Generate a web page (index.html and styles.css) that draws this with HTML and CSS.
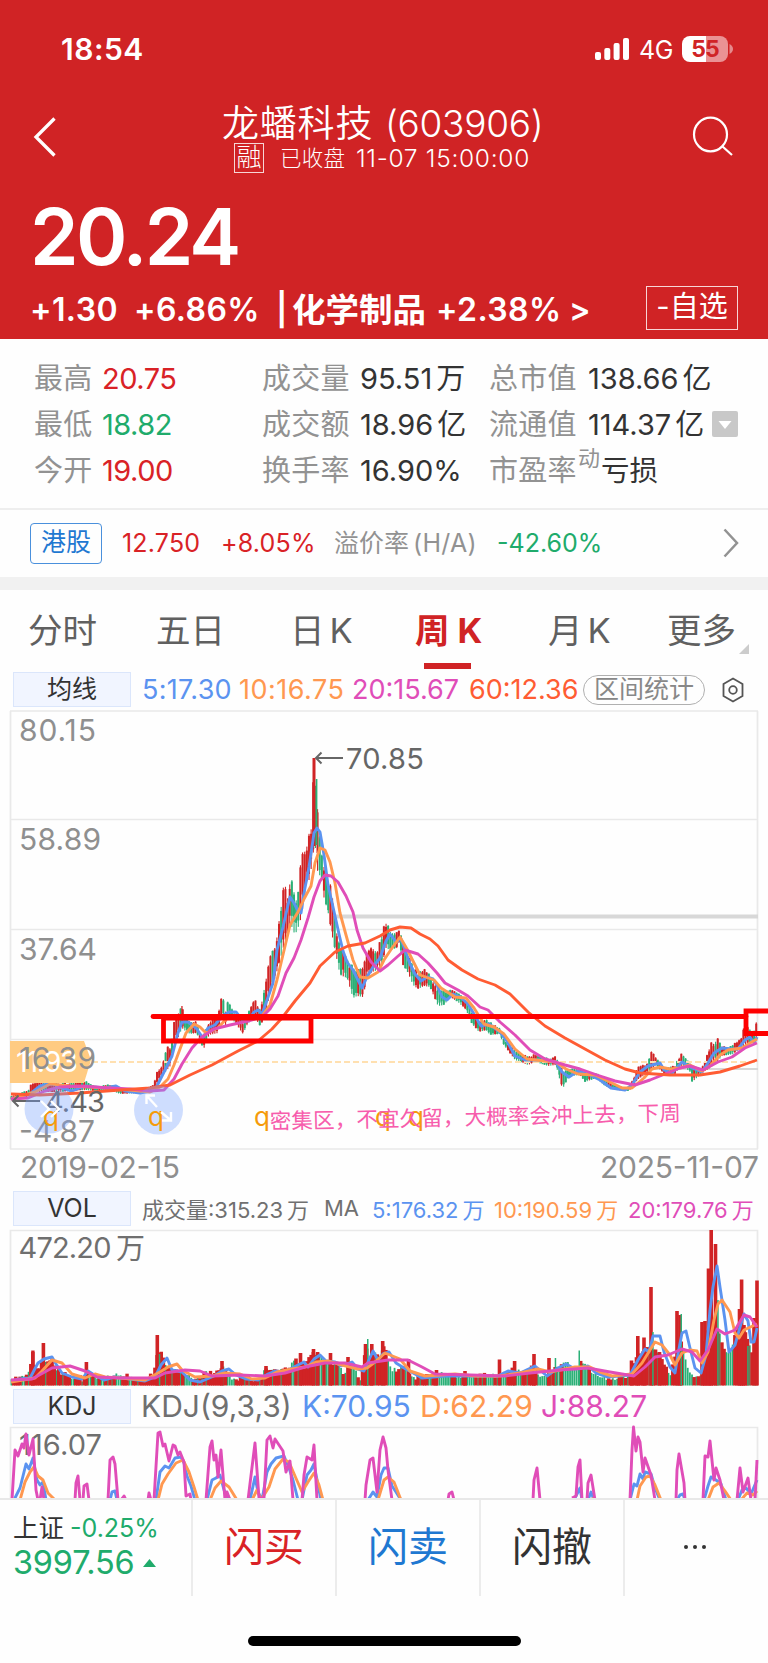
FILE: index.html
```
<!DOCTYPE html>
<html lang="zh-CN">
<head>
<meta charset="utf-8">
<title>龙蟠科技 (603906)</title>
<link rel="stylesheet" href="styles.css">
</head>
<body>
<header class="hero">
  <div class="status">
    <span class="clock">18:54</span>
    <svg class="signal" viewBox="0 0 36 24"><rect x="0" y="15" width="6" height="8" rx="2"/><rect x="9.3" y="11" width="6" height="12" rx="2"/><rect x="18.6" y="6" width="6" height="17" rx="2"/><rect x="28" y="1" width="6" height="22" rx="2"/></svg>
    <span class="net">4G</span>
    <span class="battery">55</span>
    <svg class="nub" viewBox="0 0 4 10"><path d="M0.5 0Q4 2 4 5T0.5 10Z"/></svg>
  </div>
  <nav class="nav">
    <svg class="back" viewBox="0 0 24 42"><path d="M21.500 2.500L3 21L21.500 39.500"/></svg>
    <div class="heading">
      <div class="title"><span class="t-name">龙蟠科技</span><span class="t-code">(603906)</span></div>
      <div class="subtitle"><span class="margin-tag">融</span><span class="closed">已收盘</span><span class="stamp">11-07 15:00:00</span></div>
    </div>
    <svg class="search" viewBox="0 0 42 42"><ellipse cx="18.500" cy="18.500" rx="16.500" ry="16.800"/><path d="M30.500 30.500L40 39"/></svg>
  </nav>
  <div class="price">20.24</div>
  <div class="change">
    <span class="delta">+1.30</span><span class="delta">+6.86%</span><span>|</span><span class="sector">化学制品</span><span class="delta">+2.38%</span><span class="gt">&gt;</span>
    <span class="watch">-自选</span>
  </div>
</header>

<section class="stats">
  <span class="k">最高</span><span class="v up">20.75</span><span class="k">成交量</span><span class="v">95.51<i>万</i></span><span class="k">总市值</span><span class="v">138.66<i>亿</i></span>
  <span class="k">最低</span><span class="v down">18.82</span><span class="k">成交额</span><span class="v">18.96<i>亿</i></span><span class="k">流通值</span><span class="v">114.37<i>亿</i><svg class="expand" viewBox="0 0 26 26"><rect width="26" height="26" rx="2"/><path d="M6.500 10H19.500L13 18Z"/></svg></span>
  <span class="k">今开</span><span class="v up">19.00</span><span class="k">换手率</span><span class="v">16.90%</span><span class="k">市盈率<sup>动</sup></span><span class="v loss">亏损</span>
</section>

<section class="hk">
  <span class="hk-tag">港股</span><span class="up">12.750</span><span class="up">+8.05%</span><span class="muted">溢价率<i>(H/A)</i></span><span class="down">-42.60%</span>
  <svg class="more" viewBox="0 0 16 30"><path d="M1.500 1.500L14 15L1.500 28.500"/></svg>
</section>

<nav class="tabs">
  <span>分时</span><span>五日</span><span>日<i>K</i></span><span class="on">周<i>K</i></span><span>月<i>K</i></span><span class="last">更多</span>
</nav>

<div class="legend ma">
  <span class="chip">均线</span><span class="blue">5:17.30</span><span class="orange ma10">10:16.75</span><span class="pink">20:15.67</span><span class="coral">60:12.36</span><span class="pill">区间统计</span>
  <svg class="gear" viewBox="0 0 24 26"><path d="M12 1.500L21.500 7V19L12 24.500L2.500 19V7Z"/><circle cx="12" cy="13" r="3.800"/></svg>
</div>
<svg class="kline" id="kline" viewBox="0 710 768 476">
  <g class="grid"><path d="M10.500 711V1149M757.500 711V1149M10 711H758M10 819.500H758M10 929.500H758M10 1039.500H758M10 1149H758"/></g>
  <path class="level" d="M335 916.500H758"/>
  <path class="level thin" d="M640 1069H758"/>
  <g id="candles"></g>
  <path class="dash" d="M92 1062H758"/>
  <g id="lines"></g>
  <path class="tag" d="M10 1041H84L91 1060L84 1083H10Z"/>
  <text class="tagtext" x="16" y="1072" textLength="62">11.93</text>
  <g class="axis">
    <text x="19" y="741" textLength="77">80.15</text>
    <text x="19" y="850" textLength="82">58.89</text>
    <text x="19" y="960" textLength="78">37.64</text>
    <text x="19" y="1069" textLength="77">16.39</text>
    <text x="19" y="1142" textLength="76">-4.87</text>
    <text x="20" y="1178" textLength="160">2019-02-15</text>
    <text x="600" y="1178" textLength="159">2025-11-07</text>
  </g>
  <g class="note">
    <text x="346" y="769" textLength="78">70.85</text><path d="M343 758H317M321.500 752.500L316 758L321.500 763.500"/>
    <text x="45" y="1112" textLength="60">4.43</text><path d="M40 1101H13M18.500 1095.500L13 1101L18.500 1106.500"/>
  </g>
  <g class="round"><circle cx="49" cy="1109" r="24.500"/><circle cx="158.500" cy="1110" r="24.500"/></g>
  <g class="q"><text x="43" y="1126">q</text><text x="148" y="1126">q</text><text x="254" y="1126">q</text><text x="375" y="1126">q</text><text x="408" y="1126">q</text></g>
  <path class="arrows" d="M41 1101L49 1109L41 1117M51 1101L59 1109L51 1117M157 1107L146.500 1095.500M146.500 1104V1095.500H155M161 1112L171 1120.500M171 1112V1120.500H162"/>
  <text class="memo" x="270" y="1129" textLength="411" transform="rotate(-1.150 270 1129)">密集区，不宜久留，大概率会冲上去，下周</text>
  <path class="mark round-cap" d="M153 1016.500H746"/>
  <path class="mark" d="M163.500 1018H311V1041H163.500ZM768 1011H746V1033.500H768"/>
</svg>

<div class="legend vol-legend">
  <span class="chip">VOL</span><span class="muted-dark">成交量:315.23<i>万</i></span><span class="muted-dark">MA</span><span class="blue">5:176.32<i>万</i></span><span class="orange">10:190.59<i>万</i></span><span class="pink">20:179.76<i>万</i></span>
</div>
<svg class="volume" id="volume" viewBox="0 1228 768 158">
  <path class="frame" d="M10.500 1385V1230.500H757.500V1385"/>
  <g id="bars"></g><g id="vlines"></g>
  <text class="label" x="18.500" y="1258" textLength="93">472.20</text><text class="label" x="116" y="1259">万</text>
</svg>

<div class="legend kdj-legend">
  <span class="chip">KDJ</span><span class="muted-dark">KDJ(9,3,3)</span><span class="blue">K:70.95</span><span class="orange">D:62.29</span><span class="pink">J:88.27</span>
</div>
<svg class="kdj" viewBox="0 1425 768 73">
  <path class="frame" d="M10.500 1500V1427.500H757.500V1500"/>
  <text class="label" x="19" y="1455" textLength="83">116.07</text>
  <g id="klines"></g>
</svg>

<footer class="dock">
  <div class="index"><div><span class="idx-name">上证</span><span class="idx-pct">-0.25%</span></div><div class="idx-val"><span>3997.56</span><svg viewBox="0 0 13 8"><path d="M0 8L6.500 0L13 8Z"/></svg></div></div>
  <div class="act up">闪买</div><div class="act sell">闪卖</div><div class="act">闪撤</div>
  <div class="act dots"><i></i><i></i><i></i></div>
</footer>
<div class="home"></div>
<script src="chart.js"></script>
</body>
</html>
```
FILE: styles.css
```
* { box-sizing: border-box; }
body { margin: 0; width: 768px; height: 1663px; overflow: hidden; background: #fefefe; font-family: "Inter", "Noto Sans CJK SC", sans-serif; color: #333; }
i { font-style: normal; }
svg { display: block; }
span { white-space: nowrap; }
.up { color: #d92226; }
.down { color: #20ab6b; }
.blue { color: #5b93f0; }
.orange { color: #ff9850; }
.pink { color: #e04db8; }
.coral { color: #ff5c33; }
.muted { color: #929292; }
.muted-dark { color: #707070; }

.hero { height: 339px; background: #d02325; color: #fff; }
.status { height: 98px; display: flex; align-items: center; padding-left: 61px; }
.clock { width: 534px; font-size: 30px; font-weight: 600; letter-spacing: .5px; }
.signal { width: 36px; height: 24px; fill: #fff; margin-right: 8px; }
.net { width: 43px; font-size: 25px; font-weight: 400; letter-spacing: -.5px; padding-top: 1px; }
.battery { width: 46px; height: 26px; border-radius: 8px; background: linear-gradient(90deg, #fff 53%, #ea9294 53%); color: #d02325; font-size: 23px; font-weight: 700; line-height: 26px; text-align: center; letter-spacing: -1px; }
.nub { width: 4px; height: 10px; margin-left: 1px; fill: #e58a8c; }
.nav { height: 86px; display: flex; padding-left: 33px; }
.back, .search { fill: none; stroke: #fff; }
.back { width: 24px; height: 42px; margin-top: 18px; stroke-width: 3.300; }
.heading { width: 635px; padding-top: 6px; }
.title { height: 39px; line-height: 39px; font-size: 37px; padding-left: 165px; display: flex; font-weight: 350; }
.t-name { width: 163px; letter-spacing: .8px; }
.t-code { letter-spacing: -.3px; }
.subtitle { display: flex; height: 30px; line-height: 31px; padding-left: 177px; }
.margin-tag { width: 30px; height: 30px; border: 1px solid #ffffffd0; font-size: 25px; line-height: 26px; text-align: center; margin-right: 16px; font-weight: 300; }
.closed { width: 76px; font-size: 21.500px; font-weight: 300; letter-spacing: .3px; }
.stamp { font-size: 24.500px; font-weight: 350; letter-spacing: .7px; }
.search { width: 42px; height: 42px; margin-top: 18px; stroke-width: 2.200; }
.price { height: 104px; line-height: 106px; padding-left: 30px; font-size: 78px; font-weight: 600; letter-spacing: -2.700px; }
.change { display: grid; grid-template-columns: 104px 142px 16px 144px 133px 77px 92px; padding-left: 30px; line-height: 44px; font-size: 32px; font-weight: 600; }
.change .delta { letter-spacing: .4px; }
.change .sector { font-size: 33.500px; }
.watch { height: 44px; margin-top: -2px; border: 1.500px solid #ffffffd0; font-size: 29px; font-weight: 400; line-height: 40px; text-align: center; }

.stats { height: 169px; padding: 17px 0 0 34px; display: grid; grid-template-columns: 68px 160px 98px 129px 99px 1fr; grid-auto-rows: 46px; align-content: start; line-height: 46px; font-size: 29px; }
.stats .k { color: #929292; letter-spacing: .3px; }
.stats .v:nth-child(6n+2) { letter-spacing: -.500px; }
.stats .v i { margin-left: 4px; }
.stats .loss { padding-left: 13px; font-size: 28.500px; }
.stats sup { font-size: 22px; line-height: 0; vertical-align: 15px; margin-left: 1px; }
.expand { display: inline-block; width: 26px; height: 26px; margin-left: 8px; vertical-align: -2px; fill: #c8c8c8; }
.expand path { fill: #fff; }

.hk { height: 69px; border-top: 2px solid #eee; display: grid; grid-template-columns: 92px 99px 113px 163px 226px 16px; padding: 13px 0 0 30px; line-height: 41px; font-size: 25px; }
.hk-tag { width: 72px; height: 41px; border: 1.500px solid #4a90dc; border-radius: 4px; color: #1f78d1; text-align: center; line-height: 37px; font-size: 25px; }
.hk .up { letter-spacing: .2px; }
.hk .muted i { margin-left: 4px; letter-spacing: .3px; }
.more { width: 16px; height: 30px; margin-top: 5px; fill: none; stroke: #929292; stroke-width: 2.500; }

.tabs { border-top: 13px solid #f1f1f1; height: 95px; padding: 19px 0 0 28px; display: grid; grid-template-columns: 128px 134px 125px 133px 119px 87px; line-height: 44px; font-size: 34.500px; color: #606060; }
.tabs i { margin-left: 5px; }
.tabs .on { color: #d02325; font-weight: 700; position: relative; }
.tabs .on i { margin-left: 8px; }
.tabs .on::after { content: ""; position: absolute; left: 9px; top: 54px; width: 47px; height: 6px; background: #d02325; }
.tabs .last { position: relative; }
.tabs .last::after { content: ""; position: absolute; right: 5px; top: 35px; border: solid transparent; border-width: 0 0 10px 10px; border-bottom-color: #ccc; }

.legend { display: flex; align-items: center; padding-left: 13px; height: 35px; font-size: 27px; }
.chip { width: 118px; height: 35px; background: #f1f5ff; border: 1.500px solid #dbe6fb; text-align: center; line-height: 33px; font-size: 25px; color: #333; margin-right: 11px; }
.ma { height: 35px; margin-bottom: 3px; display: grid; grid-template-columns: 129px 97px 113px 117px 114px 138px 24px; }
.ma > .blue { letter-spacing: .3px; }
.ma10 { letter-spacing: .5px; }
.pill { width: 122px; height: 30px; border: 1.500px solid #b0b0b0; border-radius: 15px; font-size: 25px; line-height: 26px; text-align: center; color: #888; }
.gear { width: 24px; height: 26px; fill: none; stroke: #555; stroke-width: 1.800; }
.kline { width: 768px; height: 476px; }
.kline path, .volume path, .kdj path { fill: none; }
.grid path, path.frame { stroke: #e9e9e9; stroke-width: 1.700; }
.level { stroke: #d8d8d8; stroke-width: 4; }
.level.thin { stroke-width: 2; }
.dash { stroke: #ffe0b0; stroke-width: 1.800; stroke-dasharray: 6 3; }
.kline .tag { fill: #ffcb82; }
.tagtext { fill: #fff; font-size: 29px; }
.axis text { fill: #8f8f8f; font-size: 30px; }
.note text { fill: #666; font-size: 29px; }
.note path { stroke: #666; stroke-width: 2; }
.round circle { fill: #75a0ff; opacity: .35; }
.arrows { stroke: #fff; stroke-width: 2.400; }
.q text { fill: #f59b0b; font-size: 26px; }
.memo { fill: #f75cac; font-size: 21.500px; font-family: "Noto Sans CJK SC", sans-serif; }
.mark { stroke: #fe0000; stroke-width: 4.800; }
.round-cap { stroke-linecap: round; }
.ln { stroke-width: 2.900; stroke-linejoin: round; }
.label { fill: #6f6f6f; font-size: 29px; }

.vol-legend { margin-top: 5px; font-size: 22px; display: grid; grid-template-columns: 129px 182px 48px 122px 134px 1fr; }
.vol-legend span:not(.chip) { padding-bottom: 1px; }
.vol-legend i { margin-left: 4px; }
.volume { width: 768px; height: 158px; margin-top: 2px; }
.kdj-legend { margin-top: 2px; display: grid; grid-template-columns: 128px 161px 118px 121px 1fr; font-size: 30px; }
.kdj { width: 768px; height: 73px; margin-top: 2px; }

.dock { height: 98px; border-top: 2px solid #e8e8e8; display: grid; grid-template-columns: 193px 144px 144px 144px 1fr; }
.index { border-right: 2px solid #ececec; padding: 11px 0 0 13px; }
.index > div { display: flex; line-height: 34px; }
.idx-name { width: 57px; font-size: 25.500px; }
.idx-pct { font-size: 25px; color: #20ab6b; }
.index > .idx-val { font-size: 32.500px; color: #20ab6b; letter-spacing: -.2px; align-items: center; gap: 8px; line-height: 35px; }
.idx-val svg { width: 13px; height: 8px; fill: #20ab6b; }
.act { border-right: 2px solid #ececec; text-align: center; line-height: 94px; font-size: 40px; }
.sell { color: #1f78d1; }
.dots { border: 0; display: flex; justify-content: center; align-items: center; gap: 5px; padding: 0 3px 3px 0; }
.dots i { width: 4px; height: 4px; border-radius: 50%; background: #333; }
.home { width: 273px; height: 10px; border-radius: 5px; background: #000; margin: 40px 0 0 248px; }
```
FILE: chart.js
```
const NS = 'http://www.w3.org/2000/svg';
const parse = s => s.trim().split(/\s+/).map(p => p.split(',').map(Number));
const RED = '#d02325', GREEN = '#2bb077';

function line(host, color, data) {
  data.split('|').forEach(part => {
    const p = document.createElementNS(NS, 'polyline');
    p.setAttribute('points', part.trim());
    p.setAttribute('fill', 'none');
    p.setAttribute('stroke', color);
    p.setAttribute('class', 'ln');
    document.getElementById(host).appendChild(p);
  });
}
function rect(host, x, y, w, h, color) {
  const r = document.createElementNS(NS, 'rect');
  r.setAttribute('x', x); r.setAttribute('y', y);
  r.setAttribute('width', w); r.setAttribute('height', Math.max(h, 1));
  r.setAttribute('fill', color);
  document.getElementById(host).appendChild(r);
}
function at(keys, x) {
  let i = 1;
  while (i < keys.length - 1 && keys[i][0] < x) i++;
  const a = keys[i - 1], b = keys[i], t = Math.min(1, Math.max(0, (x - a[0]) / (b[0] - a[0])));
  return a.slice(1).map((v, k) => v + (b[k + 1] - v) * t);
}
const noise = n => { const s = Math.sin(n * 127.1 + 3.7) * 43758.5453; return s - Math.floor(s); };

// x, high, low
const range = parse(`11,1096,1100 28,1090,1097 32,1082,1093 40,1080,1092 60,1083,1092 86,1081,1090 95,1086,1091 112,1084,1091 120,1088,1094 140,1089,1093 153,1085,1091
158,1068,1083 162,1064,1076 167,1046,1070 171,1046,1065 174,1022,1040 178,1010,1038 182,1007,1028 184,1013,1030 190,1022,1034 197,1020,1033 200,1033,1044 204,1035,1048
209,1020,1035 218,1013,1033 221,998,1020 223,995,1015 226,1012,1028 228,998,1012 233,1010,1020 243,1022,1034 247,1014,1025 254,998,1016 260,1008,1026 265,980,1018
270,955,992 275,945,978 280,910,960 284,878,945 288,893,935 290,875,922 293,880,930 295,898,935 299,890,925 301,850,918 304,850,900 307,840,880 310,826,880
312,820,860 314,759,848 316,780,848 318,812,878 321,850,873 324,862,898 328,878,912 332,885,935 335,920,950 340,945,975 347,958,978 353,965,998 357,970,996
363,965,997 367,950,978 372,945,972 378,950,970 382,930,965 386,919,948 390,929,950 397,932,948 399,930,942 403,938,965 408,952,973 413,965,985 418,972,989
424,968,986 430,975,987 438,988,1006 444,990,1005 450,989,997 458,992,1002 466,1000,1010 472,1012,1024 479,1020,1032 486,1018,1030 490,1022,1035 500,1027,1034
503,1038,1044 515,1050,1060 528,1056,1065 535,1054,1062 548,1058,1066 556,1056,1065 561,1066,1085 563,1072,1088 569,1068,1076 580,1069,1075 585,1073,1082
596,1072,1078 605,1078,1086 615,1085,1090 628,1088,1091 633,1078,1088 637,1068,1080 640,1065,1078 648,1062,1073 651,1050,1070 656,1056,1065 664,1067,1074
675,1065,1074 679,1056,1068 682,1053,1065 690,1062,1072 692,1066,1082 700,1070,1075 706,1058,1070 710,1043,1068 714,1040,1064 717,1036,1062 722,1045,1056
728,1048,1055 734,1043,1054 742,1036,1046 744,1022,1046 750,1028,1042 754,1030,1042 757,1017,1038`);
// x, top of bar
const vol = parse(`11,1379 27,1377 31,1362 33,1352 36,1370 44,1362 52,1358 56,1370 70,1377 80,1376 83,1382 88,1368 98,1380 112,1376 125,1375 140,1381 154,1374 158,1350 163,1356 166,1364
170,1368 180,1372 190,1376 194,1382 204,1372 216,1374 222,1366 228,1375 236,1380 246,1377 256,1380 262,1374 268,1368 276,1372 286,1369 296,1361 304,1366 312,1352 318,1353
324,1363 330,1366 338,1362 344,1375 348,1362 354,1368 360,1380 366,1345 370,1365 374,1352 380,1358 384,1345 392,1371 404,1368 412,1378 430,1376 445,1374 460,1377 480,1375
498,1375 505,1374 515,1368 522,1374 532,1366 540,1376 550,1374 556,1366 568,1364 575,1369 582,1360 588,1368 596,1375 608,1378 628,1378 636,1358 641,1352 650,1345 656,1350
662,1360 670,1376 676,1350 682,1340 686,1362 692,1375 700,1378 706,1330 712,1320 719,1330 724,1350 730,1352 738,1325 746,1335 752,1350 757,1320`);
const spikes = parse(`32.8,1352 43.4,1343 86.4,1362 157.3,1335 159.6,1354 222,1361 266,1366 296,1358.500 300.500,1353 313.500,1349 317.600,1352 330.500,1353 348,1357 365.500,1344 367.800,1339 371.800,1344
382.700,1341 408.500,1359 436.500,1370 465,1371 499.500,1359.500 514.600,1361 534,1354 549,1358 555.500,1358 579.300,1350.500 631.500,1360.500 637.800,1336 644,1337.500 651,1287
653,1332 659.500,1352 677,1311 680,1315 681.300,1314 702,1322 705,1321 708.500,1268.500 711.200,1230 715.500,1244 718,1300 739.500,1309 741.600,1279.500 744,1325 748,1346 754,1318 757,1280.500`);

// green is more likely while the range is falling
const STEP = 2.14;
const bars = [];
for (let i = 0, x = 11.5; x < 757; i++, x += STEP) {
  const [hi, lo] = at(range, x), [prev] = at(range, x - 5), span = lo - hi;
  const falling = hi > prev + 1, rising = hi < prev - 1;
  const odds = falling ? 0.6 : rising ? 0.2 : 0.45;
  const color = noise(i) < odds ? GREEN : RED;
  const n1 = noise(i + 900) * span * 0.28, n2 = noise(i + 1900) * span * 0.28;
  rect('candles', x - 0.5, hi + n1 * 0.6, 1.1, span - n1 * 0.6, color);
  rect('candles', x - 1, hi + n1, 2, span - n1 - n2, color);
  const y = Math.min(1382, at(vol, x)[0] + (noise(i + 77) - 0.5) * 5);
  bars.push([x, y, color]);
}
bars.filter(b => b[2] === GREEN).forEach(([x, y]) => rect('bars', x - 0.9, y, 1.8, 1385.5 - y, GREEN));
bars.filter(b => b[2] === RED).forEach(([x, y]) => rect('bars', x - 1.7, y, 3.4, 1385.5 - y, RED));
rect('candles', 312.5, 758, 3, 88, RED);
rect('candles', 315.8, 779, 1.6, 66, GREEN);
rect('candles', 181.3, 1006, 1.3, 20, RED);
const greens = [159.6, 367.8, 555.5, 579.3, 653, 681.3, 718, 748];
spikes.forEach(([x, y]) => {
  const g = greens.includes(x);
  rect('bars', x - (g ? 0.8 : 1.8), y, g ? 1.5 : 3.6, 1385.5 - y, g ? GREEN : RED);
});

line('lines', '#5b93f0', `11,1099 30,1094 40,1086 52,1083 62,1088 72,1091 85,1086 105,1088 116,1086 125,1091 140,1093 155,1090 160,1080 166,1068 172,1056 178,1033 182,1022 188,1022 196,1028 203,1038 208,1028 215,1025 222,1016 229,1012 236,1012 243,1021 248,1021 254,1012 258,1010 262,1014 266,1003 273,983 277,950 283,927 288,905 290,897 294,903 298,911 301,913 304,893 309,867 314,833 317,828 320,832 324,855 328,885 333,907 339,934 343,951 347,962 353,970 358,980 362,988 367,977 373,967 380,958 386,941 390,934 396,942 401,939 405,950 410,964 415,974 421,981 427,977 433,979 437,985 442,997 447,1000 453,994 460,997 468,1004 474,1014 481,1026 489,1024 500,1032 507,1041 515,1056 525,1060 540,1060 556,1062 562,1072 569,1077 578,1071 590,1075 600,1080 611,1088 625,1090 632,1085 640,1072 648,1066 660,1063 664,1070 672,1073 682,1062 692,1068 702,1072 708,1063 714,1053 722,1048 732,1049 738,1049 745,1040 750,1037 754,1043 757,1037`);
line('lines', '#ff9850', `11,1099 35,1092 50,1084 70,1086 90,1087 120,1089 150,1092 160,1087 168,1079 174,1065 180,1049 186,1033 194,1024 200,1027 206,1033 218,1028 226,1019 238,1016 250,1019 262,1016 270,1005 277,980 282,959 290,925 298,912 304,899 311,886 315,863 320,848 325,850 330,862 335,883 340,913 346,935 353,960 360,977 368,978 378,972 384,960 392,948 400,937 407,949 413,961 420,975 434,980 441,988 455,997 466,998 474,1008 484,1024 494,1027 504,1034 515,1049 527,1059 545,1061 556,1062 566,1069 578,1074 595,1075 610,1082 622,1088 632,1088 644,1078 652,1069 660,1067 670,1069 680,1068 690,1065 702,1071 710,1066 720,1055 728,1050 742,1048 750,1043 757,1039`);
line('lines', '#e04db8', `11,1099 28,1098 45,1091 60,1087 80,1086 110,1088 130,1089 150,1091 164,1090 174,1079 182,1064 192,1048 202,1037 214,1029 230,1025 248,1021 262,1017 270,1009 278,996 286,973 294,958 301,940 308,918 314,897 320,881 325,875 331,876 338,882 346,896 353,912 357,930 363,948 371,962 380,971 388,965 397,957 405,950 418,954 428,963 437,973 445,983 458,990 468,996 480,1007 488,1010 500,1022 515,1035 530,1050 545,1059 565,1065 580,1069 597,1075 615,1081 635,1085 650,1080 665,1074 680,1068 690,1066 703,1070 718,1062 732,1057 745,1048 757,1043`);
line('lines', '#ff5c33', `11,1094 40,1095 80,1093 120,1090 150,1088 170,1085 190,1075 212,1065 238,1051 258,1041 272,1029 282,1018 295,1001 310,983 320,966 335,952 348,946 365,943 380,936 390,930 400,927 411,928 420,934 430,939 438,946 448,960 462,970 478,979 495,985 510,994 528,1012 545,1026 565,1038 585,1049 605,1060 625,1069 640,1073 670,1075 700,1075 720,1072 740,1066 757,1060`);

line('vlines', '#5b93f0', `11,1381 20,1379 30,1378 38,1363 44,1359 52,1357 56,1364 62,1373 72,1377 82,1379 88,1371 96,1376 104,1380 114,1377 130,1379 145,1381 155,1377 161,1365 167,1358 172,1370 182,1372 190,1380 200,1382 214,1376 222,1371 229,1369 236,1375 246,1379 258,1380 268,1374 275,1371 285,1372 296,1366 304,1362 308,1367 314,1359 320,1355 326,1361 335,1362 341,1366 352,1362 358,1369 364,1371 368,1362 373,1351 378,1360 383,1354 389,1352 396,1363 404,1368 415,1374 422,1378 445,1376 480,1376 498,1376 508,1371 520,1373 535,1366 547,1376 558,1368 566,1364 575,1369 588,1366 596,1373 608,1377 630,1375 638,1360 645,1349 649,1352 653,1336 660,1336 664,1352 670,1367 675,1373 678,1354 682,1333 686,1331 690,1348 695,1368 701,1373 706,1355 710,1310 713,1287 717,1266 720,1287 725,1320 729,1352 735,1345 740,1327 744,1314 748,1321 751,1342 754,1342 757,1328`);
line('vlines', '#ff9850', `11,1382 35,1378 42,1371 52,1360 62,1363 72,1374 85,1378 95,1374 105,1377 120,1378 145,1380 160,1372 168,1367 177,1364 182,1370 195,1377 212,1376 225,1373 240,1374 252,1379 265,1378 277,1372 292,1369 305,1367 316,1362 328,1361 342,1365 358,1369 367,1368 375,1362 385,1353 400,1359 410,1371 425,1376 455,1374 475,1376 500,1376 520,1373 538,1369 550,1372 575,1367 590,1367 600,1372 612,1376 632,1374 642,1363 650,1350 655,1342 662,1345 670,1355 675,1365 682,1353 690,1350 697,1351 702,1363 708,1352 714,1320 718,1304 722,1300 730,1312 735,1333 739,1338 744,1330 757,1324`);
line('vlines', '#e04db8', `11,1380 32,1379 52,1368 70,1366 85,1371 97,1377 120,1378 155,1378 165,1373 185,1370 200,1371 212,1376 240,1375 265,1376 285,1373 305,1367 325,1363 345,1363 362,1367 368,1363 388,1360 408,1360 422,1367 435,1374 470,1375 505,1376 530,1373 560,1370 588,1368 610,1372 634,1376 645,1367 655,1357 668,1355 682,1349 692,1352 700,1361 708,1350 717,1329 725,1334 735,1330 744,1315 750,1317 757,1327`);

line('klines', '#5b93f0', `14,1500 20,1488 23,1476 26,1464 29,1469 33,1458 37,1480 40,1485 43,1482 46,1500 | 110,1500 112,1492 115,1491 117,1500 | 156,1500 160,1472 165,1466 169,1468 175,1458 181,1457 184,1463 187,1476 191,1486 195,1500 | 207,1500 212,1480 216,1478 220,1475 224,1490 230,1500 | 250,1500 255,1477 258,1492 262,1500 267,1472 271,1464 276,1458 284,1456 289,1468 293,1480 298,1500 | 302,1500 307,1475 311,1470 314,1464 318,1485 321,1500 | 368,1500 373,1492 377,1497 381,1475 384,1468 388,1468 392,1486 396,1492 401,1500 | 574,1500 580,1488 582,1500 | 588,1500 591,1492 594,1500 | 630,1500 634,1484 637,1486 640,1474 643,1479 645,1472 651,1474 655,1488 660,1500 | 677,1500 680,1495 683,1494 685,1500 | 704,1500 708,1486 711,1477 716,1480 721,1484 726,1500 | 738,1500 742,1490 746,1488 751,1494 757,1480`);
line('klines', '#ff9850', `20,1500 25,1482 30,1472 34,1467 38,1476 43,1480 48,1493 55,1500 | 158,1500 162,1484 168,1474 176,1463 183,1460 189,1472 194,1487 198,1500 | 210,1500 215,1488 221,1481 229,1487 237,1500 | 252,1500 257,1490 261,1500 269,1487 275,1469 283,1459 289,1462 295,1476 302,1492 308,1482 314,1473 319,1485 323,1500 | 378,1500 384,1480 388,1477 394,1482 401,1500 | 591,1500 594,1498 | 637,1500 640,1486 646,1477 650,1476 655,1485 661,1500 | 708,1500 713,1487 719,1483 725,1491 731,1500 | 741,1500 747,1493 753,1495 757,1491`);
line('klines', '#e04db8', `12,1500 15,1450 18,1456 20,1450 22,1444 24,1448 26,1434 29,1455 33,1439 36,1490 38,1500 | 40,1500 42,1487 44,1500 | 75,1500 76,1483 78,1476 80,1500 | 83,1500 84,1486 87,1484 89,1500 | 108,1500 110,1460 113,1457 115,1464 118,1500 | 121,1500 124,1496 126,1500 | 148,1500 149,1493 151,1500 | 154,1500 158,1433 160,1432 163,1446 165,1444 169,1461 173,1445 175,1446 178,1455 180,1452 184,1462 186,1496 190,1494 191,1500 | 206,1500 210,1447 212,1441 214,1460 216,1455 218,1477 221,1450 225,1500 227,1492 230,1500 | 248,1500 255,1443 259,1498 264,1498 267,1440 270,1436 273,1448 275,1439 283,1451 286,1472 290,1461 293,1500 | 302,1500 304,1475 307,1457 312,1460 314,1445 317,1500 | 365,1500 366,1485 370,1460 373,1458 377,1492 380,1450 383,1437 386,1448 388,1470 392,1500 | 448,1500 449,1494 452,1492 454,1500 | 533,1500 534,1480 537,1468 540,1500 | 572,1498 576,1496 578,1467 580,1460 582,1500 | 587,1500 588,1483 591,1475 595,1500 | 630,1500 632,1450 633.5,1427 636,1451 638,1437 640,1442 643,1472 645,1458 651,1475 655,1500 | 676,1500 677,1470 679,1454 684,1483 685,1500 | 703,1500 705,1456 708,1457 710,1441 714,1480 716,1468 720,1480 724,1500 | 737,1500 740,1468 743,1492 748,1478 751,1500 | 755,1500 757,1460`);
```
